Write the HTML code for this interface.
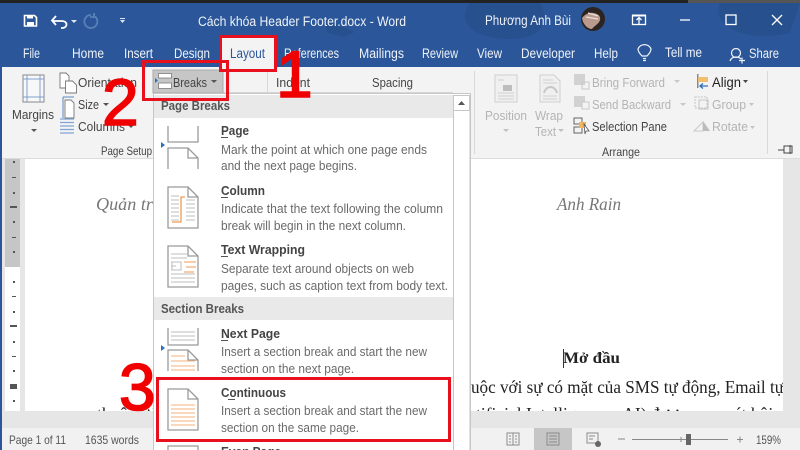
<!DOCTYPE html>
<html><head><meta charset="utf-8"><style>
html,body{margin:0;padding:0;width:800px;height:450px;overflow:hidden;background:#e6e6e6}
svg{display:block;position:absolute;left:0;top:0;filter:blur(.35px)}
text{font-family:"Liberation Sans","Noto Sans CJK SC",sans-serif}
.w{fill:#eef2f8;font-size:13.5px}
.r{fill:#444;font-size:13px}
.g{fill:#b4b4b4;font-size:13px}
.h{fill:#555;font-size:12.5px;font-weight:bold}
.tt{fill:#444;font-size:12.5px;font-weight:bold}
.d{fill:#6a6a6a;font-size:12.5px}
.s{fill:#555;font-size:12px}
.num{fill:#f00000;font-size:66px;stroke:#f00000;stroke-width:1.6px}
.ser{font-family:"Liberation Serif","Noto Serif CJK SC",serif}
</style></head><body>
<svg width="800" height="450" viewBox="0 0 800 450" xmlns="http://www.w3.org/2000/svg">
<defs><clipPath id="doc"><rect x="25" y="158" width="758" height="253"/></clipPath><clipPath id="menu"><rect x="154" y="95" width="299" height="355"/></clipPath></defs>
<!-- backgrounds -->
<rect width="800" height="450" fill="#e6e6e6"/>
<rect width="800" height="3" fill="#222"/>
<rect x="688" width="112" height="3" fill="#555"/>
<rect y="3" width="800" height="64" fill="#2b579a"/>
<path d="M470 3c-15 20 5 36 40 36s40-20 30-36zM720 3c-10 25 30 40 70 30l10-30zM325 20l30 12-10 5-18-4z" fill="#27508f"/>
<rect y="67" width="800" height="91" fill="#f3f3f3"/>
<rect y="158" width="800" height="1" fill="#dcdcdc"/>
<rect x="0" y="67" width="2" height="383" fill="#2b579a"/>
<rect x="220" y="36" width="54" height="32" fill="#f3f3f3"/>
<!-- ruler -->
<rect x="5" y="159" width="15" height="108" fill="#c6c6c6"/>
<rect x="5" y="267" width="15" height="144" fill="#fff"/>
<g fill="#555">
<rect x="13" y="161" width="2" height="2"/><rect x="12" y="177" width="4" height="1"/><rect x="13" y="192" width="2" height="2"/><rect x="10" y="206" width="7" height="2"/><rect x="13" y="221" width="2" height="2"/><rect x="12" y="237" width="4" height="1"/><rect x="13" y="251" width="2" height="2"/>
<rect x="13" y="281" width="2" height="2"/><rect x="12" y="296" width="4" height="1"/><rect x="13" y="311" width="2" height="2"/><rect x="10" y="325" width="7" height="2"/><rect x="13" y="341" width="2" height="2"/><rect x="12" y="356" width="4" height="1"/><rect x="13" y="370" width="2" height="2"/><rect x="10" y="384" width="7" height="5"/><rect x="13" y="400" width="2" height="2"/>
</g>
<!-- document -->
<rect x="25" y="159" width="758" height="252" fill="#fff"/>
<g clip-path="url(#doc)">
<text class="ser" x="96" y="210" font-size="18" font-style="italic" fill="#777" textLength="62" lengthAdjust="spacingAndGlyphs">Quản trị</text>
<text class="ser" x="557" y="210" font-size="18" font-style="italic" fill="#777" textLength="64" lengthAdjust="spacingAndGlyphs">Anh Rain</text>
<text class="ser" x="563" y="363" font-size="16" font-weight="bold" fill="#222" textLength="57" lengthAdjust="spacingAndGlyphs">Mở đầu</text>
<rect x="563" y="349" width="1" height="19" fill="#333"/>
<text class="ser" x="471" y="393" font-size="17.5" fill="#222" textLength="313" lengthAdjust="spacingAndGlyphs">uộc với sự có mặt của SMS tự động, Email tự</text>
<text class="ser" x="476" y="420" font-size="17.5" fill="#222">tificial Intelligence - AI) được xem xét hội nh</text>
<text class="ser" x="97" y="420" font-size="17.5" fill="#222">thuộc Wi</text>
</g>
<!-- title bar -->
<g fill="none" stroke="#fff">
<path d="M24.500 15.500h10l2 2v8.500h-12z" stroke-width="1.600"/>
<rect x="27" y="15" width="6" height="3.500" fill="#fff" stroke="none"/>
<rect x="27" y="22" width="7" height="4" fill="#fff" stroke="none"/>
<path d="M53 21h9c6 0 6 7 0 7h-1M56 16l-4 4.500 4 4.500" stroke-width="1.800"/>
<path d="M91 15a6.500 6.500 0 1 0 4 1.500M94 13v4h-4" stroke="#5a80b8" stroke-width="1.800"/>
</g>
<path d="M71 20h6l-3 3z M120 18h5v1h-5z M120 20h5l-2.500 3z" fill="#dfe7f2"/>
<text class="w" x="198" y="26" textLength="208" lengthAdjust="spacingAndGlyphs">Cách khóa Header Footer.docx  -  Word</text>
<text class="w" x="485" y="25" textLength="86" lengthAdjust="spacingAndGlyphs">Phương Anh Bùi</text>
<circle cx="593" cy="19" r="12" fill="#2c2420"/>
<path d="M582 18c3-4 8-6 12-5s7 3 6 7-5 5-8 9c-4 0-9-4-10-11z" fill="#b99a8c"/>
<path d="M588 13l10 3M586 17l12 2" stroke="#eadfd8" stroke-width="1.300"/>
<g fill="none" stroke="#fff">
<rect x="632.500" y="15.500" width="13" height="9" stroke-width="1.300"/>
<path d="M632 15.500h14" stroke-width="2"/>
<path d="M639 24v-6M636.500 20l2.500-2.500 2.500 2.500" stroke-width="1.300"/>
<path d="M680 20h10" stroke-width="1.300"/>
<rect x="726" y="15" width="10" height="9.500" stroke-width="1.300"/>
<path d="M772 15l10 10M782 15l-10 10" stroke-width="1.300"/>
</g>
<!-- tabs -->
<text class="w" x="23" y="58" textLength="17" lengthAdjust="spacingAndGlyphs">File</text>
<text class="w" x="72" y="58" textLength="32" lengthAdjust="spacingAndGlyphs">Home</text>
<text class="w" x="124" y="58" textLength="29" lengthAdjust="spacingAndGlyphs">Insert</text>
<text class="w" x="174" y="58" textLength="36" lengthAdjust="spacingAndGlyphs">Design</text>
<text x="230" y="58" font-size="13.500" fill="#2b579a" textLength="35" lengthAdjust="spacingAndGlyphs">Layout</text>
<text class="w" x="284" y="58" textLength="55" lengthAdjust="spacingAndGlyphs">References</text>
<text class="w" x="359" y="58" textLength="45" lengthAdjust="spacingAndGlyphs">Mailings</text>
<text class="w" x="422" y="58" textLength="36" lengthAdjust="spacingAndGlyphs">Review</text>
<text class="w" x="477" y="58" textLength="25" lengthAdjust="spacingAndGlyphs">View</text>
<text class="w" x="521" y="58" textLength="54" lengthAdjust="spacingAndGlyphs">Developer</text>
<text class="w" x="594" y="58" textLength="24" lengthAdjust="spacingAndGlyphs">Help</text>
<text class="w" x="665" y="57" textLength="37" lengthAdjust="spacingAndGlyphs">Tell me</text>
<text class="w" x="749" y="58" textLength="30" lengthAdjust="spacingAndGlyphs">Share</text>
<g fill="none" stroke="#eef2f8" stroke-width="1.200">
<path d="M642 56c-3-3-4-5-4-7a7 7 0 0 1 13 0c0 2-1 4-4 7zM643 58.500h3M643 60.500h3"/>
<circle cx="736" cy="53" r="4.500"/>
<path d="M730 61c1-3 3-4 6-4s4 1 5 2M739 60.500h6M742 57.500v6"/>
</g>
<!-- ribbon separators -->
<g fill="#d8d8d8">
<rect x="474" y="71" width="1" height="83"/><rect x="767" y="71" width="1" height="83"/>
<rect x="267" y="71" width="1" height="21"/>
<rect x="153" y="92" width="300" height="1"/>
</g>
<!-- Breaks button -->
<rect x="153" y="70" width="70" height="23" fill="#c6c6c6" stroke="#aaa"/>
<path d="M155 78l3 2.500-3 2.500z" fill="#2f6fba"/>
<g fill="#fff" stroke="#777" stroke-width=".8">
<path d="M158.500 73.500h13v4.500h-13zM158.500 88.500h13v-5.500h-13z"/>
</g>
<text class="r" x="173" y="87" textLength="34" fill="#333" lengthAdjust="spacingAndGlyphs">Breaks</text>
<path d="M211 80h6l-3 3z" fill="#555"/>
<text class="r" x="276" y="87" textLength="34" lengthAdjust="spacingAndGlyphs">Indent</text>
<text class="r" x="372" y="87" textLength="41" lengthAdjust="spacingAndGlyphs">Spacing</text>
<!-- Page setup -->
<rect x="23" y="75" width="21" height="27" fill="#f8f8f8" stroke="#888"/>
<path d="M27 75v27M40 75v27M23 79h21M23 97h21" stroke="#7e9fcf" stroke-width="1" fill="none"/>
<text class="r" x="12" y="119" textLength="42" lengthAdjust="spacingAndGlyphs">Margins</text>
<path d="M31 129h6l-3 3z" fill="#555"/>
<g fill="#fff" stroke="#777" stroke-width=".9">
<path d="M60 73h6l3 3v12h-9z"/><path d="M65.500 81h7l4 4v8h-11z"/>
<path d="M65 100h6l3 3v15h-9z"/>
</g>
<path d="M63 97h11M63 97v21" stroke="#5a8ac6" fill="none"/>
<text class="r" x="78" y="87" textLength="59" lengthAdjust="spacingAndGlyphs">Orientation</text>
<text class="r" x="78" y="109" textLength="21" lengthAdjust="spacingAndGlyphs">Size</text>
<path d="M103 103h6l-3 3z M128 125h6l-3 3z" fill="#555"/>
<text class="r" x="78" y="131" textLength="47" lengthAdjust="spacingAndGlyphs">Columns</text>
<g stroke="#7ea3d4" stroke-width="1.200"><path d="M60 119h14M60 122.500h14M60 126h14M60 129.500h14M60 133h14"/></g>
<text x="101" y="155" font-size="12" fill="#444" textLength="51" lengthAdjust="spacingAndGlyphs">Page Setup</text>
<!-- Arrange -->
<g fill="#f0f0f0" stroke="#cfcfcf">
<rect x="495" y="75" width="22" height="27"/>
<path d="M540 75h14l6 6v21h-20z"/>
</g>
<path d="M503 85h9v6h-9z" fill="#bdbdbd"/>
<path d="M498 80h6M498 93h16M498 96h16M498 99h16M543 80h10M543 83h14M543 96h14M543 99h14" stroke="#cfcfcf" fill="none"/>
<path d="M544 93c2-8 11-8 13 0" stroke="#c8c8c8" stroke-width="2" fill="none"/>
<text class="g" x="485" y="120" textLength="42" lengthAdjust="spacingAndGlyphs">Position</text>
<path d="M503 129h6l-3 3z M558 129h6l-3 3z" fill="#c0c0c0"/>
<text class="g" x="535" y="120" textLength="28" lengthAdjust="spacingAndGlyphs">Wrap</text>
<text class="g" x="535" y="136" textLength="21" lengthAdjust="spacingAndGlyphs">Text</text>
<rect x="574" y="74" width="11" height="11" fill="#d2d2d2"/><rect x="582" y="82" width="7" height="7" fill="none" stroke="#c8c8c8"/>
<rect x="574" y="96" width="11" height="11" fill="#d2d2d2"/><rect x="582" y="102" width="7" height="7" fill="#f3f3f3" stroke="#c8c8c8"/>
<text class="g" x="592" y="87" textLength="73" lengthAdjust="spacingAndGlyphs">Bring Forward</text>
<text class="g" x="592" y="109" textLength="79" lengthAdjust="spacingAndGlyphs">Send Backward</text>
<path d="M674 80h6l-3 3zM680 103h6l-3 3z" fill="#c8c8c8"/>
<rect x="574" y="118" width="8" height="6" fill="none" stroke="#666"/><rect x="574" y="127" width="8" height="6" fill="none" stroke="#666"/>
<rect x="579" y="122" width="7" height="6" fill="#f0b45c"/>
<path d="M584 124l5 7-3 0-1 3z" fill="#fff" stroke="#555" stroke-width=".8"/>
<text class="r" x="592" y="131" textLength="75" fill="#333" lengthAdjust="spacingAndGlyphs">Selection Pane</text>
<rect x="697" y="74" width="1.500" height="14" fill="#888"/>
<rect x="698" y="77" width="10" height="5" fill="#f0c070"/>
<path d="M708 86h-8M703 83.500l-3 2.500 3 2.500" stroke="#2f6fba" stroke-width="1.300" fill="none"/>
<text x="712" y="87" font-size="13.500" fill="#222" textLength="29" lengthAdjust="spacingAndGlyphs">Align</text>
<path d="M743 80h5l-2.500 3z" fill="#444"/>
<g fill="none" stroke="#c4c4c4"><rect x="695" y="97" width="12" height="11" stroke-dasharray="2 1"/><rect x="699" y="100" width="9" height="9"/></g>
<text class="g" x="712" y="109" textLength="34" lengthAdjust="spacingAndGlyphs">Group</text>
<text class="g" x="712" y="131" textLength="36" lengthAdjust="spacingAndGlyphs">Rotate</text>
<path d="M749 103h5l-2.500 3zM750 126h5l-2.500 3z" fill="#c4c4c4"/>
<path d="M694 131l9-9v9z" fill="none" stroke="#c8c8c8"/><path d="M703 121l7 10h-7z" fill="#bcbcbc"/>
<text x="602" y="156" font-size="12" fill="#444" textLength="38" lengthAdjust="spacingAndGlyphs">Arrange</text>
<path d="M778 150h6M784 146h8v7h-8zM790 145v9" stroke="#444" fill="none"/>
<!-- Status bar -->
<rect y="428" width="800" height="22" fill="#f1f1f1"/>
<rect x="0" y="428" width="2" height="22" fill="#2b579a"/>
<text class="s" x="9" y="444" textLength="57" lengthAdjust="spacingAndGlyphs">Page 1 of 11</text>
<text class="s" x="85" y="444" textLength="54" lengthAdjust="spacingAndGlyphs">1635 words</text>
<text class="s" x="756" y="444" textLength="25" lengthAdjust="spacingAndGlyphs">159%</text>
<rect x="534" y="428" width="38" height="22" fill="#c6c6c6"/>
<g fill="none" stroke="#8a8a8a">
<path d="M507 433h6v12h-6zM513 433h6v12h-6zM509 436h2M509 439h2M509 442h2M515 436h2M515 439h2M515 442h2"/>
<rect x="547" y="433" width="12" height="12"/><path d="M549 436h8M549 439h8M549 442h8"/>
<path d="M587 433h11v10h-11zM589 436h6M589 439h4"/>
</g>
<circle cx="598" cy="444" r="3" fill="#666"/>
<path d="M618 439h7M632 439.500h96M737 439.500h6M740 436.500v6M681 437v5" stroke="#888" fill="none"/>
<rect x="686" y="434" width="5" height="11" fill="#666"/>
<!-- Menu -->
<rect x="153.500" y="93.500" width="317" height="358" fill="#fff" stroke="#c6c6c6"/>
<rect x="154" y="95" width="299" height="23" fill="#e9e9e9"/>
<rect x="154" y="297" width="299" height="23" fill="#e9e9e9"/>
<rect x="453.500" y="95.500" width="16.500" height="356" fill="#fff" stroke="#c6c6c6"/>
<rect x="453.500" y="95.500" width="16" height="15" fill="#fff" stroke="#c6c6c6"/>
<path d="M458 105h7l-3.500-4z" fill="#555"/>
<text class="h" x="161" y="110" textLength="69" lengthAdjust="spacingAndGlyphs">Page Breaks</text>
<text class="h" x="161" y="313" textLength="83" lengthAdjust="spacingAndGlyphs">Section Breaks</text>
<text class="tt" x="221" y="135" textLength="28" lengthAdjust="spacingAndGlyphs">Page</text><rect x="221" y="137" width="7" height="1" fill="#555"/>
<text class="d" x="221" y="154" textLength="206" lengthAdjust="spacingAndGlyphs">Mark the point at which one page ends</text>
<text class="d" x="221" y="170" textLength="136" lengthAdjust="spacingAndGlyphs">and the next page begins.</text>
<text class="tt" x="221" y="195" textLength="44" lengthAdjust="spacingAndGlyphs">Column</text><rect x="221" y="197" width="7" height="1" fill="#555"/>
<text class="d" x="221" y="213" textLength="222" lengthAdjust="spacingAndGlyphs">Indicate that the text following the column</text>
<text class="d" x="221" y="230" textLength="185" lengthAdjust="spacingAndGlyphs">break will begin in the next column.</text>
<text class="tt" x="221" y="254" textLength="84" lengthAdjust="spacingAndGlyphs">Text Wrapping</text><rect x="221" y="256" width="7" height="1" fill="#555"/>
<text class="d" x="221" y="273" textLength="193" lengthAdjust="spacingAndGlyphs">Separate text around objects on web</text>
<text class="d" x="221" y="290" textLength="227" lengthAdjust="spacingAndGlyphs">pages, such as caption text from body text.</text>
<text class="tt" x="221" y="338" textLength="59" lengthAdjust="spacingAndGlyphs">Next Page</text><rect x="221" y="340" width="7" height="1" fill="#555"/>
<text class="d" x="221" y="356" textLength="206" lengthAdjust="spacingAndGlyphs">Insert a section break and start the new</text>
<text class="d" x="221" y="373" textLength="133" lengthAdjust="spacingAndGlyphs">section on the next page.</text>
<text class="tt" x="221" y="397" textLength="65" lengthAdjust="spacingAndGlyphs">Continuous</text><rect x="228" y="399" width="7" height="1" fill="#555"/>
<text class="d" x="221" y="415" textLength="206" lengthAdjust="spacingAndGlyphs">Insert a section break and start the new</text>
<text class="d" x="221" y="432" textLength="138" lengthAdjust="spacingAndGlyphs">section on the same page.</text>
<text class="tt" x="221" y="456" textLength="60" lengthAdjust="spacingAndGlyphs">Even Page</text>
<!-- Menu icons -->
<g fill="none" stroke="#9a9a9a" stroke-width="1.300">
<path d="M168 126v16h30v-16M168 169v-21h20l10 10v11M188 148v10h10"/>
<path d="M168 187h20l10 10v31h-30zM188 187v10h10"/>
<path d="M168 246h20l10 10v31h-30zM188 246v10h10"/>
<path d="M168 328v17h30v-17"/>
<path d="M168 371v-21h20l10 10v11M188 350v10h10"/>
<path d="M168 389h20l10 10v31h-30zM188 389v10h10"/>
<path d="M168 450v-4h30v4"/>
</g>
<path d="M161 142l4 3-4 3zM161 345l4 3-4 3z" fill="#2f6fba"/>
<g stroke="#bdbdbd" fill="none">
<path d="M171 196h8M171 200h8M171 204h8M171 208h8M171 212h8M171 216h8M171 220h8M186 200h9M186 204h9M186 208h9M186 212h9M186 216h9M186 220h9"/>
<path d="M171 254h16M171 258h16M171 262h5M171 266h5M171 270h5M171 274h24M171 278h24M171 282h24"/>
<rect x="172" y="262" width="9" height="8"/>
<path d="M171 332h24M171 336h24M171 340h24"/>
</g>
<g fill="none" stroke="#f09a50">
<path d="M172 222h9v-25h4" stroke-width="1.300"/>
<path d="M184 262h12M186 267h10M184 272h10"/>
<path d="M171 356h14M171 361h24M171 366h24M171 370h24" stroke="#f5b27e"/>
<path d="M171 405h24M171 409h24M171 413h24M171 417h24M171 421h24M171 425h24" stroke="#f5b27e"/>
</g>
<!-- Red callouts -->
<rect x="220.500" y="36.500" width="55" height="34" fill="none" stroke="#e8101c" stroke-width="3"/>
<rect x="143.500" y="61.500" width="84" height="38" fill="none" stroke="#e8101c" stroke-width="3"/>
<rect x="157.500" y="378.500" width="292" height="62" fill="none" stroke="#e8101c" stroke-width="3"/>
<text class="num" x="276" y="97">1</text>
<text class="num" x="102" y="125">2</text>
<text class="num" x="119" y="410">3</text>
</svg>
</body></html>
